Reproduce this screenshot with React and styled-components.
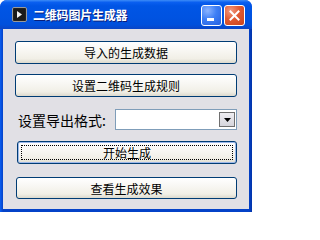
import React from 'react';
import styled, { createGlobalStyle } from 'styled-components';

const GlobalStyle = createGlobalStyle`
  html, body {
    margin: 0;
    padding: 0;
    background: #ffffff;
  }
  body {
    font-family: Tahoma, "Noto Sans CJK SC", "Noto Sans", sans-serif;
  }
`;

const Window = styled.div`
  width: 252px;
  height: 212px;
  display: flex;
  flex-direction: column;
  background: #0842d6;
  border-radius: 7px 7px 0 0;
  overflow: hidden;
  box-sizing: border-box;
`;

const TitleBar = styled.div`
  height: 29px;
  flex: none;
  display: flex;
  align-items: center;
  padding: 0 4px 0 12px;
  box-sizing: border-box;
  background: linear-gradient(
    to bottom,
    #3d8cf7 0%,
    #0a5ff0 8%,
    #0055e5 20%,
    #0053e1 60%,
    #0050dc 85%,
    #0a45c6 100%
  );
`;

const AppIcon = styled.svg`
  width: 15px;
  height: 15px;
  flex: none;
  margin-top: 0;
`;

const Title = styled.span`
  margin-left: 6px;
  color: #ffffff;
  font-family: "Noto Sans CJK SC", sans-serif;
  font-weight: 700;
  font-size: 12px;
  letter-spacing: -0.2px;
  text-shadow: 1px 1px 0 #0a1e7a;
  flex: 1;
`;

const CaptionButtons = styled.div`
  display: flex;
  gap: 2px;
  margin-right: 3px;
  margin-top: 1px;
`;

const CaptionButton = styled.div`
  width: 21px;
  height: 21px;
  box-sizing: border-box;
  border: 1px solid #ffffff;
  border-radius: 3px;
  position: relative;
  display: flex;
  align-items: center;
  justify-content: center;
  background: ${(p) =>
    p.$close
      ? 'radial-gradient(circle at 30% 25%, #f29a80 0%, #e05a33 45%, #c8431c 100%)'
      : 'radial-gradient(circle at 30% 25%, #8bb4ff 0%, #3e7ff5 45%, #2460e0 100%)'};
`;

const MinBar = styled.span`
  position: absolute;
  left: 5px;
  bottom: 4px;
  width: 7px;
  height: 3px;
  background: #ffffff;
`;

const Frame = styled.div`
  flex: 1;
  display: flex;
  padding: 0 3px 3px 3px;
  background: linear-gradient(to right, #0a5ef2, #0442c8 3px, #0442c8 calc(100% - 3px), #0133a8);
`;

const Client = styled.div`
  flex: 1;
  background: #e1e0e5;
  display: flex;
  flex-direction: column;
  padding: 12px 12px 0 12px;
  box-sizing: border-box;
`;

const XpButton = styled.button`
  height: ${(p) => p.$h || 23}px;
  margin-left: ${(p) => p.$indent || 0}px;
  margin-top: ${(p) => p.$mt || 0}px;
  box-sizing: border-box;
  border: 1px solid #003c74;
  border-radius: 3px;
  background: linear-gradient(to bottom, #ffffff 0%, #f8f7f3 40%, #f1efe6 80%, #dcd9cd 100%);
  font-family: "Noto Sans CJK SC", sans-serif;
  font-size: 12px;
  color: #000000;
  padding: 0;
  position: relative;
  display: flex;
  align-items: center;
  justify-content: center;
  cursor: default;

  ${(p) =>
    p.$default &&
    `
    box-shadow: inset 0 0 0 1px #9cb8ea;
  `}
`;

const FocusRing = styled.span`
  position: absolute;
  inset: 3px;
  border: 1px dotted #000000;
  pointer-events: none;
`;

const FormatRow = styled.div`
  margin-top: 12px;
  height: 21px;
  display: flex;
  align-items: center;
  padding-left: 3px;
`;

const Label = styled.span`
  font-family: "Noto Sans CJK SC", sans-serif;
  font-size: 14px;
  color: #000000;
  width: 97px;
  flex: none;
  white-space: nowrap;
`;

const Combo = styled.div`
  flex: 1;
  height: 21px;
  box-sizing: border-box;
  border: 1px solid #7f9db9;
  background: #ffffff;
  display: flex;
  justify-content: flex-end;
  align-items: center;
  padding-right: 1px;
`;

const ComboArrow = styled.div`
  width: 16px;
  height: 15px;
  box-sizing: border-box;
  border: 1px solid #6f6f6f;
  background: linear-gradient(to bottom, #eeedf1, #d6d5dc);
  display: flex;
  align-items: center;
  justify-content: center;
`;

export default function App() {
  return (
    <>
      <GlobalStyle />
      <Window>
        <TitleBar>
          <AppIcon viewBox="0 0 15 15">
            <rect x="0.5" y="0.5" width="14" height="14" rx="1.5" fill="#2b2b2b" stroke="#9a9a9a" />
            <rect x="1.5" y="1.5" width="12" height="12" fill="#1a1a1a" />
            <path d="M5 4 L10 7.5 L5 11 Z" fill="#f2f2f2" />
          </AppIcon>
          <Title>二维码图片生成器</Title>
          <CaptionButtons>
            <CaptionButton>
              <MinBar />
            </CaptionButton>
            <CaptionButton $close>
              <svg width="11" height="11" viewBox="0 0 11 11">
                <path d="M1.5 1.5 L9.5 9.5 M9.5 1.5 L1.5 9.5" stroke="#ffffff" strokeWidth="2" strokeLinecap="square" />
              </svg>
            </CaptionButton>
          </CaptionButtons>
        </TitleBar>
        <Frame>
          <Client>
            <XpButton>导入的生成数据</XpButton>
            <XpButton $mt={10}>设置二维码生成规则</XpButton>
            <FormatRow>
              <Label>设置导出格式:</Label>
              <Combo>
                <ComboArrow>
                  <svg width="7" height="4" viewBox="0 0 7 4">
                    <path d="M0 0 H7 L3.5 4 Z" fill="#000000" />
                  </svg>
                </ComboArrow>
              </Combo>
            </FormatRow>
            <XpButton $mt={11} $indent={2} $default>
              <FocusRing />
              开始生成
            </XpButton>
            <XpButton $mt={13} $h={22} $indent={1}>查看生成效果</XpButton>
          </Client>
        </Frame>
      </Window>
    </>
  );
}
